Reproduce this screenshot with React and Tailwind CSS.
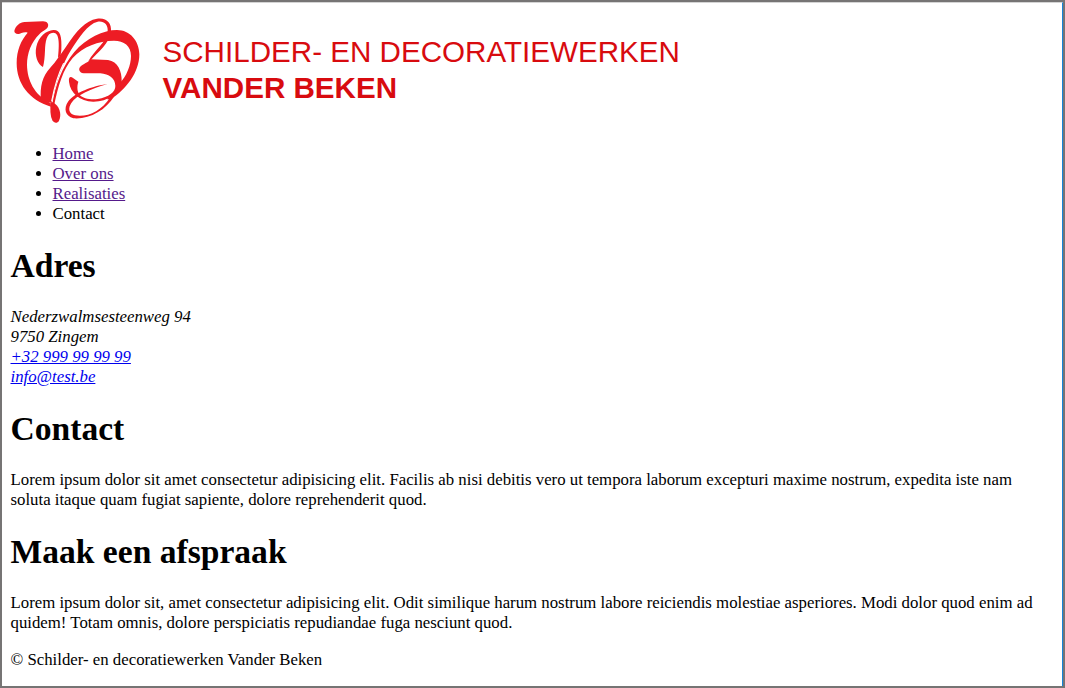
function Emblem() {
  return (
    <svg viewBox="32 48 390 330" className="h-[110px] w-[130px] shrink-0" fill="#ed1c24" aria-hidden="true">
      <path d="M42 93C45 79 59 66 73 66L128 64C141 64 147 73 142 82C137 90 127 92 117 103C93 126 80 160 80 195C81 240 101 285 151 309L152 320C86 301 49 250 49 190C49 150 62 121 82 98C69 94 60 103 53 102C46 102 42 98 42 93Z" />
      <path d="M151 307C149 331 150 349 156 361C161 370 171 371 176 362C183 347 181 326 165 312L158 307Z" />
      <path d="M128 201C112 192 102 167 108 140C114 111 138 91 159 90C180 89 185 109 183 150L181 165L173 174C177 133 178 98 159 98C138 98 135 126 134 151C133 172 132 187 128 201Z" />
      <path d="M122 302C118 260 126 229 151 202C166 186 180 163 195 143C230 90 255 62 290 56C320 52 334 70 332 94C329 129 292 157 271 181L264 184C282 151 319 127 322 94C324 73 310 62 292 65C262 71 235 115 212 150C187 190 165 250 154 308L146 307Z" />
      <path fillRule="evenodd" d="M156 312C164 258 186 198 222 156C257 114 310 90 350 90C389 90 417 123 417 163C417 218 377 268 330 299L319 297C344 282 355 266 358 249C378 230 392 196 392 168C392 137 371 122 341 122C293 123 249 139 217 174C188 207 173 260 162 313Z" />
      <path fill="none" stroke="#fff" strokeWidth="3.5" d="M154 304C162 262 174 222 190 190" />
      <path d="M271 178L323 180C353 184 365 216 364 243C361 280 320 306 278 305C239 303 210 280 206 245C204 229 212 229 218 234L234 245C229 261 231 275 238 284C247 296 270 299 292 297C325 292 346 275 345 258C345 235 326 222 300 220L250 220C235 218 233 205 242 198C254 189 261 189 271 178Z" />
      <path d="M322 252C276 258 223 278 204 304C188 327 196 349 219 355C266 359 315 332 342 289L329 293C303 333 260 353 224 346C204 341 203 324 213 309C229 285 273 266 322 252Z" />
    </svg>
  );
}

const heading = "mb-[21.5px] pt-px h-[39px] text-[33.6px] leading-[38px] font-bold";

export default function App() {
  return (
    <div className="h-[688px] overflow-hidden border-2 border-[#767474] bg-white font-['Liberation_Serif',serif] text-[16.8px] leading-5 text-black">
      <div className="h-full border-t border-r border-t-[#d4d4d4] border-r-[#1683d8] pt-[13px] pl-[8.5px]">
        <header className="flex h-[110px] gap-[22px]">
          <Emblem />
          <div className="pt-[18px] font-['Liberation_Sans',sans-serif] text-[29.6px] leading-9 whitespace-nowrap text-[#d80b0f]">
            <div>SCHILDER- EN DECORATIEWERKEN</div>
            <div className="font-bold">VANDER BEKEN</div>
          </div>
        </header>
        <nav className="mt-[18px] mb-[22px]">
          <ul className="list-disc pl-[42px]">
            <li><a href="#home" className="text-[#551a8b] underline">Home</a></li>
            <li><a href="#over" className="text-[#551a8b] underline">Over ons</a></li>
            <li><a href="#realisaties" className="text-[#551a8b] underline">Realisaties</a></li>
            <li>Contact</li>
          </ul>
        </nav>
        <h1 className={heading}>Adres</h1>
        <address className="mb-[22.5px] italic">
          Nederzwalmsesteenweg 94<br />
          9750 Zingem<br />
          <a href="#tel" className="text-[#0000ee] underline">+32 999 99 99 99</a><br />
          <a href="#mail" className="text-[#0000ee] underline">info@test.be</a>
        </address>
        <h1 className={heading}>Contact</h1>
        <p className="mb-[22.5px]">
          Lorem ipsum dolor sit amet consectetur adipisicing elit. Facilis ab nisi debitis vero ut tempora laborum excepturi maxime nostrum, expedita iste nam<br />
          soluta itaque quam fugiat sapiente, dolore reprehenderit quod.
        </p>
        <h1 className={heading}>Maak een afspraak</h1>
        <p className="mb-[17px]">
          Lorem ipsum dolor sit, amet consectetur adipisicing elit. Odit similique harum nostrum labore reiciendis molestiae asperiores. Modi dolor quod enim ad<br />
          quidem! Totam omnis, dolore perspiciatis repudiandae fuga nesciunt quod.
        </p>
        <footer>© Schilder- en decoratiewerken Vander Beken</footer>
      </div>
    </div>
  );
}
